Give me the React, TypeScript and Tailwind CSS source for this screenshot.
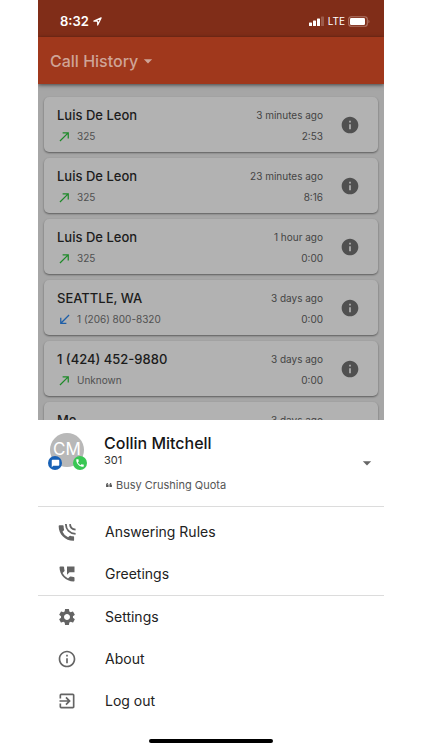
import React from "react";
import {
  MdArrowDropDown, MdCallMade, MdCallReceived, MdChatBubble, MdInfo, MdInfoOutline,
  MdLocalPhone, MdPermPhoneMsg, MdSettings, MdExitToApp, MdFormatQuote,
} from "react-icons/md";

type Call = { name: string; detail: string; when: string; length: string; incoming?: boolean };

const calls: Call[] = [
  { name: "Luis De Leon", detail: "325", when: "3 minutes ago", length: "2:53" },
  { name: "Luis De Leon", detail: "325", when: "23 minutes ago", length: "8:16" },
  { name: "Luis De Leon", detail: "325", when: "1 hour ago", length: "0:00" },
  { name: "SEATTLE, WA", detail: "1 (206) 800-8320", when: "3 days ago", length: "0:00", incoming: true },
  { name: "1 (424) 452-9880", detail: "Unknown", when: "3 days ago", length: "0:00" },
  { name: "Me", detail: "301", when: "3 days ago", length: "0:00" },
];

function StatusBar() {
  return (
    <div className="flex h-[37px] shrink-0 items-center justify-between bg-[#802d18] pt-[5px] pr-[14px] pl-[22px] text-white">
      <div className="flex items-center gap-1">
        <span className="text-[13px] leading-4 font-semibold">8:32</span>
        <svg viewBox="0 0 10 10" className="size-[9px]" fill="none" stroke="currentColor" strokeWidth="1.3" strokeLinejoin="round">
          <path d="M9 1 1 4.6h4.2V9Z" />
        </svg>
      </div>
      <div className="flex items-center gap-[3px]">
        <svg viewBox="0 0 16 10" className="h-[10px] w-4" fill="currentColor">
          <rect x="0" y="6.500" width="3" height="3.500" rx=".6" />
          <rect x="4" y="4.500" width="3" height="5.500" rx=".6" />
          <rect x="8" y="2.500" width="3" height="7.500" rx=".6" />
          <rect x="12" y="0.500" width="3" height="9.500" rx=".6" opacity=".22" />
        </svg>
        <span className="text-[10px] leading-4">LTE</span>
        <svg viewBox="0 0 22 11" className="h-[11px] w-[22px]" fill="none">
          <rect x=".7" y=".7" width="18.600" height="9.600" rx="2.600" stroke="#b07566" strokeWidth="1.1" />
          <rect x="2" y="2" width="15" height="7" rx="1.200" fill="#fff" />
          <path d="M20.500 3.700v3.600c1.300-.5 1.300-3.100 0-3.600Z" fill="#b07566" />
        </svg>
      </div>
    </div>
  );
}

function CallCard({ call }: { call: Call }) {
  return (
    <li className="flex h-[55px] shrink-0 items-center rounded-[5px] bg-[#b2b2b2] pr-[18px] pl-[13px] shadow-[0_1px_2px_rgba(0,0,0,0.45)]">
      <div className="min-w-0 flex-1 pt-[2px]">
        <div className="flex items-center justify-between">
          <span className="text-[13px] leading-[21px] font-medium text-[#1c1c1c]">{call.name}</span>
          <span className="text-[10px] leading-[21px] text-[#444]">{call.when}</span>
        </div>
        <div className="flex items-center text-[10px] leading-[21px] text-[#505050]">
          {call.incoming ? <MdCallReceived className="size-[15px] text-[#1e5fa8]" /> : <MdCallMade className="size-[15px] text-[#1f8a2a]" />}
          <span className="ml-[5px] flex-1">{call.detail}</span>
          <span className="text-[#444]">{call.length}</span>
        </div>
      </div>
      <button type="button" aria-label="Call details" className="ml-[17px] text-[#505050]">
        <MdInfo className="size-5" />
      </button>
    </li>
  );
}

function AnsweringRulesIcon() {
  return (
    <svg viewBox="0 0 24 24" className="size-5" fill="currentColor">
      <path d="M19.500 17c-1.200 0-2.400-.2-3.500-.6a1 1 0 0 0-1 .3l-1.700 1.700A14 14 0 0 1 6.600 11.600l1.700-1.700a1 1 0 0 0 .2-1A11 11 0 0 1 8 5a1 1 0 0 0-1-1H3a1 1 0 0 0-1 1c0 9.600 8 17.500 17.500 17.500a1 1 0 0 0 1-1V18a1 1 0 0 0-1-1Z" />
      <path d="M10.600 2.500c.2 6.700 4.500 11.300 11.700 11.700M15.600 2.500c.3 3.900 2.700 6.400 6.700 6.700" fill="none" stroke="currentColor" strokeWidth="2.200" />
    </svg>
  );
}

function MenuItem({ icon, label }: { icon: React.ReactNode; label: string }) {
  return (
    <li>
      <button type="button" className="flex h-[42px] w-full items-center gap-[28px] pl-[19px] text-left text-[#646464]">
        {icon}
        <span className="text-sm leading-5 text-[#222]">{label}</span>
      </button>
    </li>
  );
}

function Profile() {
  return (
    <div className="flex h-[87px] items-start border-b border-[#dcdcdc] pt-[13px] pr-[7px] pl-3">
      <div className="relative flex size-[34px] items-center justify-center rounded-full bg-[#b8b8b8] text-[17px] text-white">
        CM
        <span className="absolute -bottom-[3px] -left-[2px] flex size-[14px] items-center justify-center rounded-full bg-[#1760b5]">
          <MdChatBubble className="size-[9px]" />
        </span>
        <span className="absolute -right-[3px] -bottom-[3px] flex size-[14px] items-center justify-center rounded-full bg-[#39c754]">
          <MdLocalPhone className="size-[10px]" />
        </span>
      </div>
      <div className="ml-5 flex-1">
        <h2 className="text-base leading-5 font-medium text-[#161616]">Collin Mitchell</h2>
        <p className="text-[11px] leading-[14px] text-[#333]">301</p>
        <p className="mt-2 flex items-center gap-[2px] text-[11px] leading-5 text-[#555]">
          <MdFormatQuote className="size-[10px] rotate-180" />
          Busy Crushing Quota
        </p>
      </div>
      <button type="button" aria-label="Switch account" className="mt-5 text-[#666]">
        <MdArrowDropDown className="size-5" />
      </button>
    </div>
  );
}

export default function App() {
  return (
    <div className="h-screen bg-white px-[38px] font-[Inter,'Liberation_Sans',sans-serif]">
      <div className="flex h-full flex-col">
        <main className="flex min-h-0 flex-1 flex-col overflow-hidden bg-[#a6a6a6]">
          <StatusBar />
          <header className="z-10 flex h-[47px] shrink-0 items-center bg-[#a0381c] pl-3 shadow-[0_1px_4px_rgba(0,0,0,0.6)]">
            <button type="button" className="flex items-center text-base leading-5 font-medium text-[#cfa497]">
              Call History
              <MdArrowDropDown className="size-5" />
            </button>
          </header>
          <ul className="flex flex-col gap-[6px] px-[6px] pt-[13px]">
            {calls.map((call, i) => <CallCard key={i} call={call} />)}
          </ul>
        </main>
        <section aria-label="Account menu" className="shrink-0 bg-white">
          <Profile />
          <ul className="border-b border-[#dcdcdc] pt-1">
            <MenuItem icon={<AnsweringRulesIcon />} label="Answering Rules" />
            <MenuItem icon={<MdPermPhoneMsg className="size-5" />} label="Greetings" />
          </ul>
          <ul>
            <MenuItem icon={<MdSettings className="size-5" />} label="Settings" />
            <MenuItem icon={<MdInfoOutline className="size-5" />} label="About" />
            <MenuItem icon={<MdExitToApp className="size-5" />} label="Log out" />
          </ul>
          <div className="flex h-7 items-end justify-center pb-[7px]">
            <div className="h-1 w-[124px] rounded-full bg-black" />
          </div>
        </section>
      </div>
    </div>
  );
}
